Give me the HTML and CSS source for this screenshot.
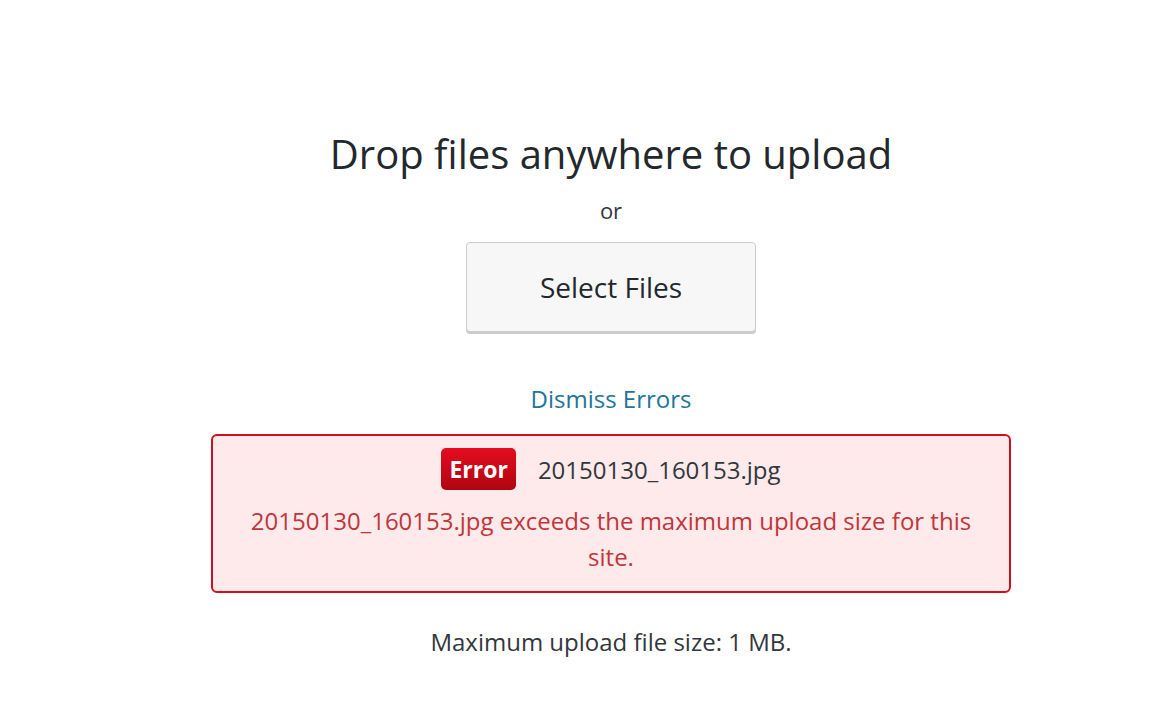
FILE: index.html
```html
<!DOCTYPE html>
<html>
<head>
<meta charset="utf-8">
<link rel="stylesheet" href="styles.css">
</head>
<body>
<div class="page">
  <div class="uploader">
    <h2 class="drop-title">Drop files anywhere to upload</h2>
    <p class="or">or</p>
    <button class="select-btn">Select Files</button>
    <a class="dismiss" href="#">Dismiss Errors</a>
    <div class="error-box">
      <div class="error-head">
        <span class="badge">Error</span>
        <span class="fname">20150130_160153.jpg</span>
      </div>
      <p class="error-msg">20150130_160153.jpg exceeds the maximum upload size for this site.</p>
    </div>
    <p class="max-size">Maximum upload file size: 1 MB.</p>
  </div>
</div>
</body>
</html>
```
FILE: styles.css
```css
html, body {
  margin: 0;
  padding: 0;
  background: #fff;
}
body {
  font-family: "Open Sans", "Noto Sans", sans-serif;
  color: #23282d;
}
.page {
  padding-left: 46px;
  padding-top: 126px;
}
.uploader {
  display: flex;
  flex-direction: column;
  align-items: center;
}
.drop-title {
  margin: 0;
  font-size: 40px;
  font-weight: 400;
  line-height: 56px;
}
.or {
  margin: 13px 0 0;
  font-size: 22px;
  line-height: 30px;
  color: #32373c;
}
.select-btn {
  margin-top: 17px;
  width: 290px;
  height: 90px;
  background: #f7f7f7;
  border: 1px solid #ccc;
  border-radius: 4px;
  box-shadow: 0 2px 0 #ccc;
  font-family: inherit;
  font-size: 28px;
  color: #23282d;
  padding: 0;
}
.dismiss {
  margin-top: 51px;
  font-size: 24px;
  line-height: 32px;
  color: #21759b;
  text-decoration: none;
}
.error-box {
  margin-top: 19px;
  width: 800px;
  box-sizing: border-box;
  border: 2px solid #d0101c;
  border-radius: 6px;
  background: #feeaea;
  padding: 12px 20px 16px;
  text-align: center;
}
.error-head {
  display: flex;
  justify-content: center;
  align-items: center;
  gap: 22px;
}
.badge {
  display: inline-block;
  background: linear-gradient(#e40d1e, #b00413);
  color: #fff;
  font-weight: 700;
  font-size: 23px;
  line-height: 42px;
  padding: 0 8px;
  border-radius: 5px;
}
.fname {
  font-size: 24px;
  color: #32373c;
}
.error-msg {
  margin: 13px 0 0;
  font-size: 24px;
  line-height: 36px;
  color: #c0363a;
}
.max-size {
  margin: 34px 0 0;
  font-size: 24px;
  line-height: 30px;
  color: #32373c;
}
```
